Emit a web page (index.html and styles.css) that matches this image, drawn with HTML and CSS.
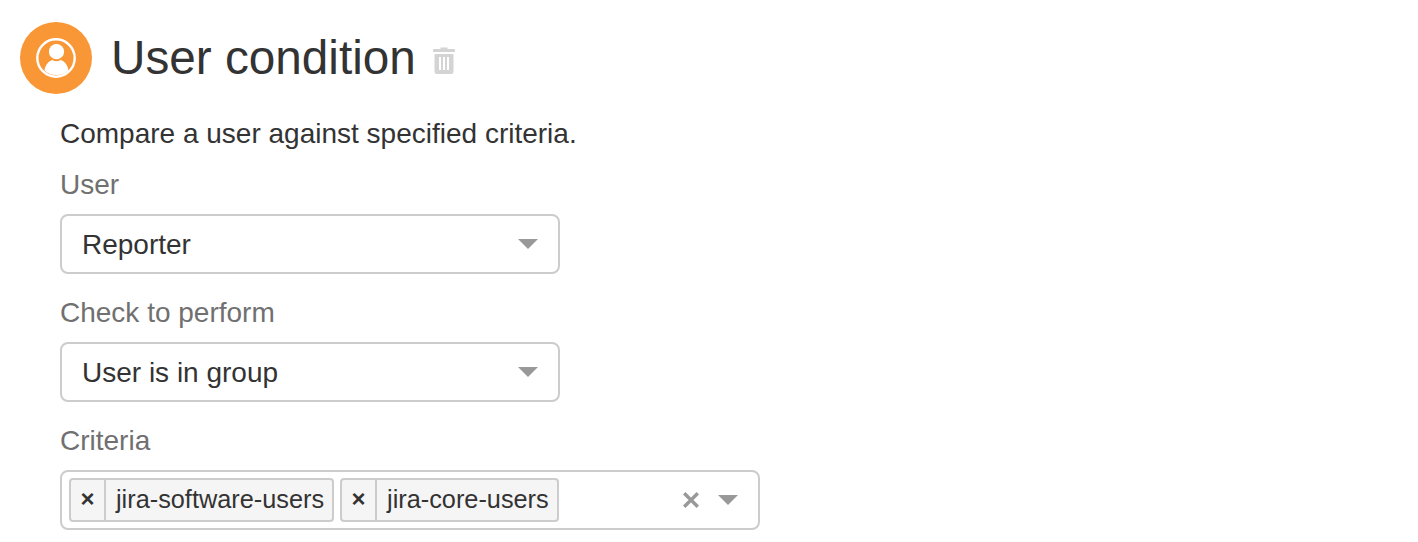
FILE: index.html
```html
<!DOCTYPE html>
<html lang="en">
<head>
<meta charset="utf-8">
<title>User condition</title>
<link rel="stylesheet" href="styles.css">
</head>
<body>
<header class="head">
  <svg class="badge" viewBox="0 0 72 72" width="72" height="72" aria-hidden="true">
    <circle cx="36" cy="36" r="36" fill="#f99736"/>
    <circle cx="36" cy="36" r="18.7" fill="none" stroke="#fff" stroke-width="2.4"/>
    <circle cx="36.500" cy="29.700" r="7.600" fill="#fff"/>
    <path d="M24.500 48.500c1-6 4-9.500 8-10.500 2.500 1.600 5.500 1.600 8 0 4 1 7 4.500 8 10.500-3.300 3-7.300 4.600-12 4.600s-8.700-1.600-12-4.600z" fill="#fff"/>
  </svg>
  <h1 class="title">User condition</h1>
  <svg class="trash" viewBox="0 0 22 28" width="22" height="28" aria-hidden="true">
    <path d="M7.500 3V1.500h7V3H21a1 1 0 0 1 1 1v2H0V4a1 1 0 0 1 1-1z" fill="#d4d4d4"/>
    <path fill-rule="evenodd" d="M1.500 8h19v17.500a2.500 2.500 0 0 1-2.500 2.500H4a2.500 2.500 0 0 1-2.500-2.500zM6 11v13h2V11zM10 11v13h2V11zM14 11v13h2V11z" fill="#d4d4d4"/>
  </svg>
</header>
<main class="form">
  <p class="desc">Compare a user against specified criteria.</p>
  <div class="label">User</div>
  <div class="select">
    <span class="value">Reporter</span>
    <span class="arrow"></span>
  </div>
  <div class="label">Check to perform</div>
  <div class="select">
    <span class="value">User is in group</span>
    <span class="arrow"></span>
  </div>
  <div class="label">Criteria</div>
  <div class="select multi">
    <span class="tag"><span class="tag-x">×</span><span class="tag-text">jira-software-users</span></span>
    <span class="tag"><span class="tag-x">×</span><span class="tag-text">jira-core-users</span></span>
    <svg class="clear" viewBox="0 0 16 16" width="16" height="16" aria-hidden="true">
      <path d="M1.200 1.200l13.600 13.600M14.800 1.200L1.200 14.800" stroke="#999" stroke-width="3.400" fill="none"/>
    </svg>
    <span class="arrow"></span>
  </div>
</main>
</body>
</html>
```
FILE: styles.css
```css
* { box-sizing: border-box; }
html, body { margin: 0; padding: 0; background: #fff; }
body {
  width: 1418px;
  height: 542px;
  overflow: hidden;
  font-family: "Liberation Sans", Arial, sans-serif;
  color: #333;
  padding: 22px 0 0 20px;
}
.head { display: flex; align-items: center; height: 72px; }
.badge { flex: none; }
.title {
  margin: 0 0 0 19px;
  font-size: 47.7px;
  font-weight: 400;
  line-height: 72px;
  color: #333;
}
.trash { margin: 4px 0 0 17px; flex: none; }
.form { margin: 20px 0 0 40px; }
.desc { margin: 0 0 10px; font-size: 28px; line-height: 40px; }
.label { font-size: 28px; line-height: 40px; padding-top: 1px; margin-bottom: 9px; color: #707070; }
.select {
  display: flex;
  align-items: center;
  width: 500px;
  height: 60px;
  margin-bottom: 18px;
  padding: 0 20px;
  border: 2px solid #ccc;
  border-radius: 8px;
  font-size: 28px;
}
.value { flex: 1; padding-top: 2px; }
.arrow {
  flex: none;
  width: 0;
  height: 0;
  border-left: 10px solid transparent;
  border-right: 10px solid transparent;
  border-top: 10px solid #999;
}
.multi { width: 700px; padding: 0 20px 0 7px; gap: 6px; margin-bottom: 0; }
.tag {
  display: flex;
  height: 44px;
  border: 2px solid #ccc;
  border-radius: 4px;
  background: #f5f5f5;
  font-size: 25.3px;
}
.tag-x {
  width: 35px;
  border-right: 2px solid #ccc;
  text-align: center;
  font-weight: 700;
  font-size: 24px;
  line-height: 38px;
}
.tag-text { padding: 0 8px 0 10px; line-height: 38px; }
.clear { margin-left: auto; margin-right: 13px; }
```
